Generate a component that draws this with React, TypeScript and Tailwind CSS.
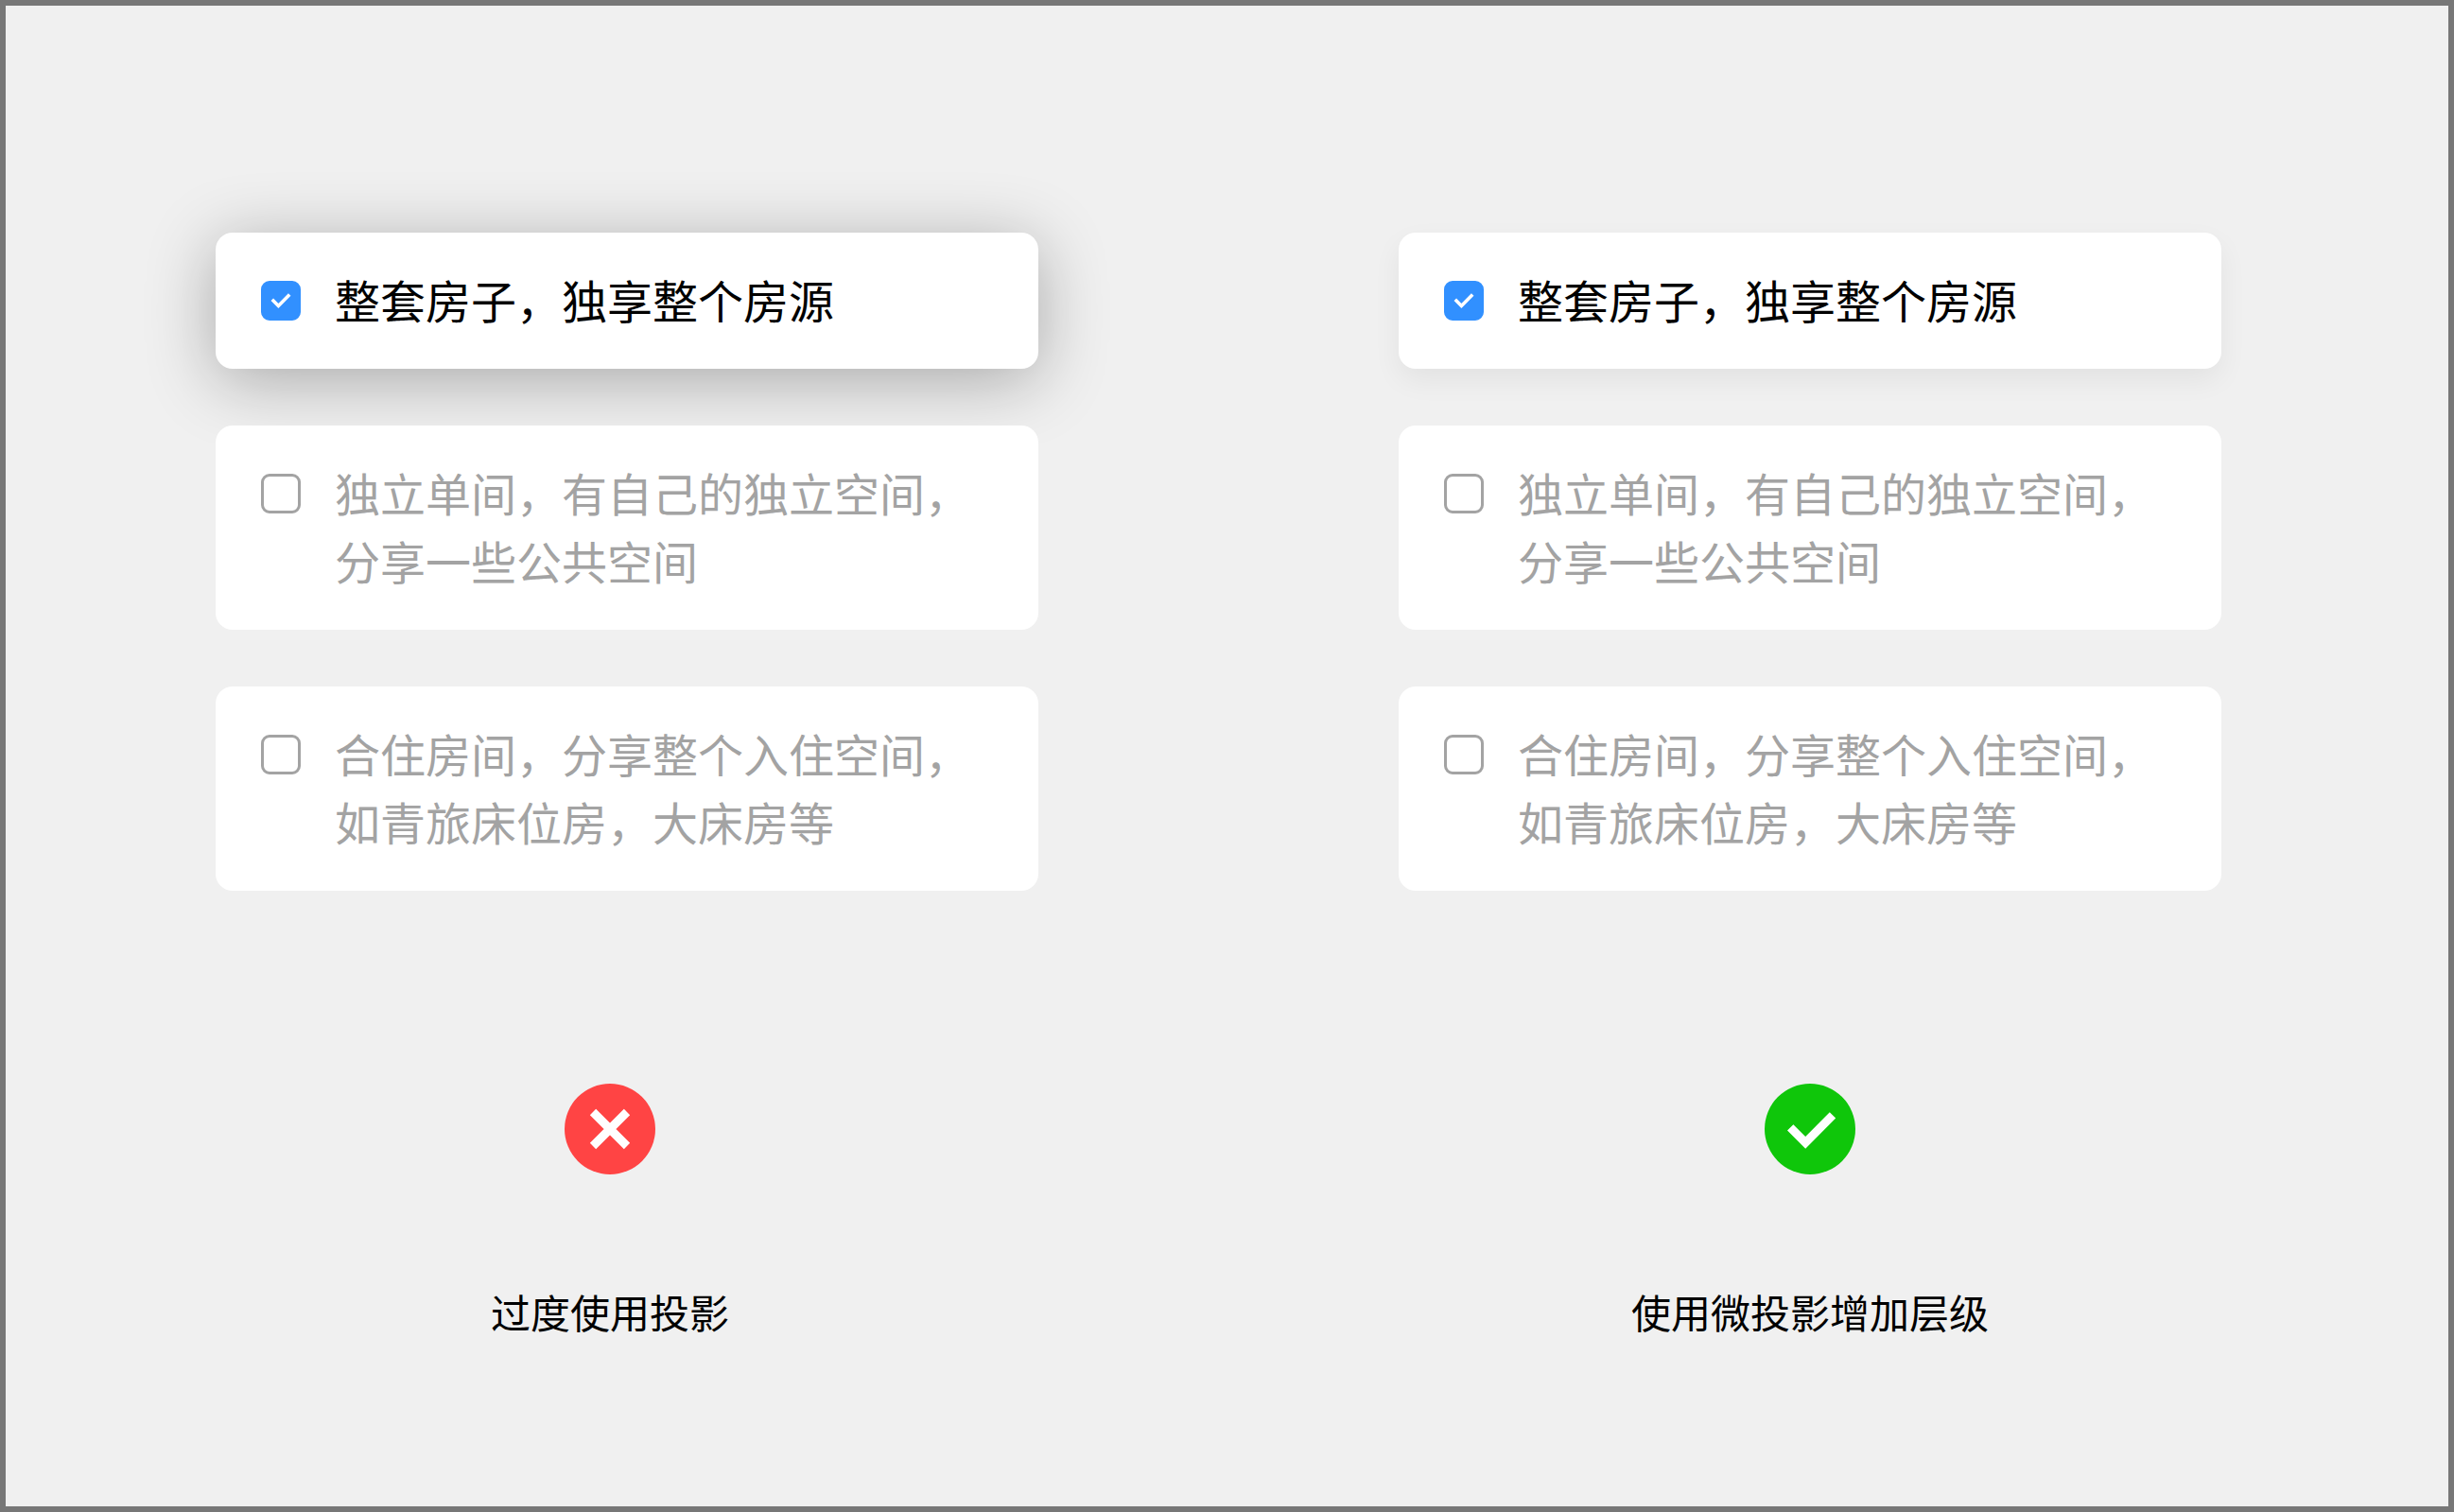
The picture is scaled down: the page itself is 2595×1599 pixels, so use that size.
import * as React from "react";

interface Option {
  id: string;
  text: string;
  checked: boolean;
}

interface ExampleProps {
  name: string;
  selectedShadow: string;
  captionClass: string;
  caption: string;
  icon: React.ReactNode;
}

const options: Option[] = [
  { id: "entire", text: "整套房子，独享整个房源", checked: true },
  {
    id: "private",
    text: "独立单间，有自己的独立空间，分享一些公共空间",
    checked: false,
  },
  {
    id: "shared",
    text: "合住房间，分享整个入住空间，如青旅床位房，大床房等",
    checked: false,
  },
];

const CrossIcon: React.FC = () => (
  <svg viewBox="0 0 96 96" className="size-24" aria-hidden="true">
    <circle cx="48" cy="48" r="48" fill="#ff4444" />
    <path d="M30 30L66 66M66 30L30 66" stroke="#fff" strokeWidth="9" />
  </svg>
);

const CheckIcon: React.FC = () => (
  <svg viewBox="0 0 96 96" className="size-24" aria-hidden="true">
    <circle cx="48" cy="48" r="48" fill="#0fc60a" />
    <path
      d="M27.2 46.4L43.2 62.4L72 33.4"
      fill="none"
      stroke="#fff"
      strokeWidth="9"
    />
  </svg>
);

const OptionCard: React.FC<{
  option: Option;
  name: string;
  selectedShadow: string;
}> = ({ option, name, selectedShadow }) => {
  const id = `${name}-${option.id}`;

  return (
    <label
      htmlFor={id}
      className={`
        relative flex items-start gap-9 rounded-[18px] bg-white px-12 pt-[34px] pb-[38px]
        text-5xl leading-[72px] cursor-pointer
        ${option.checked ? `text-black ${selectedShadow}` : "text-[#a3a3a3]"}
      `}
    >
      <span className="relative mt-[17px] size-[42px] shrink-0">
        <input
          id={id}
          type="checkbox"
          defaultChecked={option.checked}
          className="peer block size-[42px] appearance-none rounded-[9px] border-3 border-[#a3a3a3] checked:border-[#3190ff] checked:bg-[#3190ff]"
        />
        <svg
          viewBox="0 0 42 42"
          className="pointer-events-none absolute inset-0 hidden size-full peer-checked:block"
          aria-hidden="true"
        >
          <path
            d="M11.8 19.8L18.4 26.4L30.2 14.6"
            fill="none"
            stroke="#fff"
            strokeWidth="3.6"
          />
        </svg>
      </span>
      <span>{option.text}</span>
    </label>
  );
};

const Example: React.FC<ExampleProps> = ({
  name,
  selectedShadow,
  captionClass,
  caption,
  icon,
}) => (
  <figure>
    <div className="flex flex-col gap-[60px]">
      {options.map((option) => (
        <OptionCard
          key={option.id}
          option={option}
          name={name}
          selectedShadow={selectedShadow}
        />
      ))}
    </div>
    <figcaption
      className={`mt-[204px] flex flex-col items-center gap-[115px] text-[42px] leading-[60px] text-black ${captionClass}`}
    >
      {icon}
      {caption}
    </figcaption>
  </figure>
);

export default function App() {
  return (
    <main className="min-h-screen border-6 border-[#777777] bg-[#f0f0f0] pt-60 pr-60 pl-[222px] font-['Noto_Sans_CJK_SC',sans-serif]">
      <div className="grid grid-cols-2 gap-[381px]">
        <Example
          name="heavy"
          selectedShadow="shadow-[0_12px_72px_rgba(0,0,0,0.3)]"
          captionClass="pr-9"
          caption="过度使用投影"
          icon={<CrossIcon />}
        />
        <Example
          name="subtle"
          selectedShadow="shadow-[0_12px_30px_rgba(0,0,0,0.06)]"
          captionClass=""
          caption="使用微投影增加层级"
          icon={<CheckIcon />}
        />
      </div>
    </main>
  );
}
